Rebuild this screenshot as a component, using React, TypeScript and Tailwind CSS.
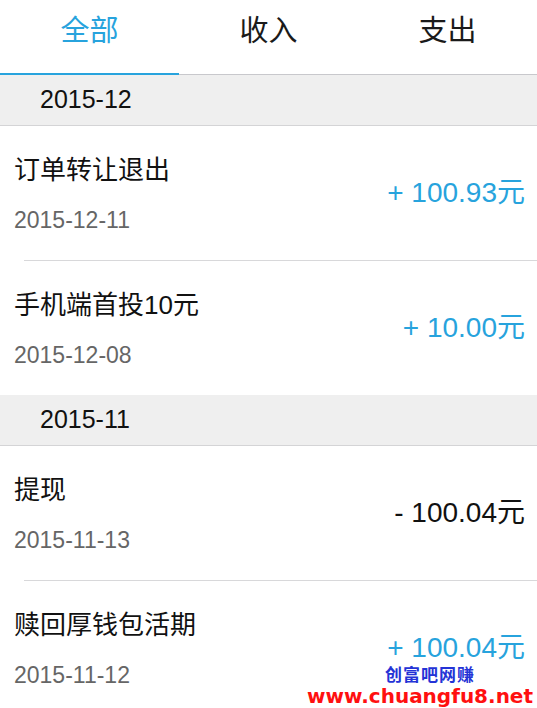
import React from 'react';

const sections = [
  {
    month: '2015-12',
    items: [
      { title: '订单转让退出', date: '2015-12-11', amount: '+ 100.93元', income: true },
      { title: '手机端首投10元', date: '2015-12-08', amount: '+ 10.00元', income: true },
    ],
  },
  {
    month: '2015-11',
    items: [
      { title: '提现', date: '2015-11-13', amount: '- 100.04元', income: false },
      { title: '赎回厚钱包活期', date: '2015-11-12', amount: '+ 100.04元', income: true },
    ],
  },
];

const tabs = ['全部', '收入', '支出'];

const App = () => {
  return (
    <div
      className="relative w-[537px] h-[708px] overflow-hidden bg-white"
      style={{ fontFamily: '"Liberation Sans", "Noto Sans CJK SC", sans-serif' }}
    >
      {/* Tabs */}
      <div className="flex h-[75px] border-b border-[#c8c8cc]">
        {tabs.map((tab, i) => (
          <div
            key={tab}
            className={`flex-1 flex items-center justify-center pb-[10px] text-[29px] ${
              i === 0 ? 'text-[#27a3dd] border-b-2 border-[#27a3dd] -mb-px' : 'text-[#1a1a1a]'
            }`}
          >
            {tab}
          </div>
        ))}
      </div>

      {sections.map((section) => (
        <div key={section.month}>
          <div className="h-[51px] flex items-center pl-[40px] bg-[#efefef] border-b border-[#d4d4d6] text-[25px] text-[#111]">
            {section.month}
          </div>
          {section.items.map((item, idx) => (
            <div key={item.title}>
              <div className="flex items-center justify-between pl-[14px] pr-[12px] h-[134px]">
                <div className="flex flex-col pt-[3px]">
                  <div className="text-[26px] text-[#111] leading-none">{item.title}</div>
                  <div className="text-[23px] text-[#666] leading-none mt-[26px]">{item.date}</div>
                </div>
                <div
                  className={`text-[28px] leading-none ${item.income ? 'text-[#27a3dd]' : 'text-[#111]'}`}
                >
                  {item.amount}
                </div>
              </div>
              {idx < section.items.length - 1 && <div className="ml-[24px] h-px bg-[#d8d8da]" />}
            </div>
          ))}
        </div>
      ))}

      {/* watermark */}
      <div className="absolute right-[4px] bottom-[2px] flex flex-col items-end leading-none">
        <div className="mr-[58px] text-[17px] font-bold text-[#2433d6] tracking-[1px]">创富吧网赚</div>
        <div className="text-[20px] font-bold text-[#ff1010] mt-[2px]" style={{ fontFamily: '"DejaVu Sans", sans-serif' }}>
          www.chuangfu8.net
        </div>
      </div>
    </div>
  );
};

export default App;
